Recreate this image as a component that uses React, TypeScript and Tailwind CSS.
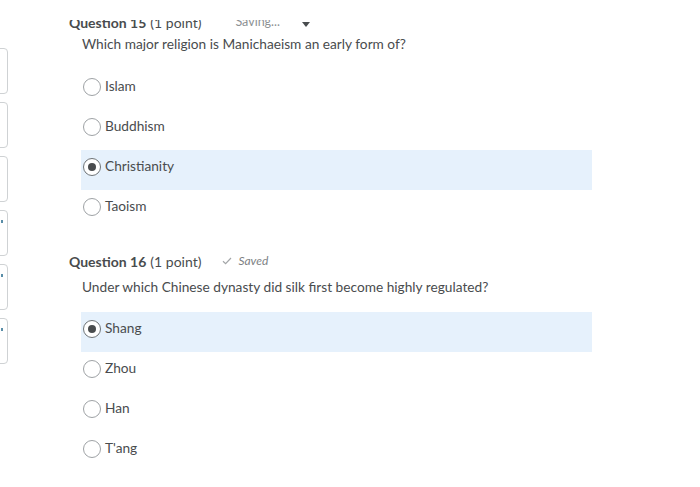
import React from "react";

const font = { fontFamily: "Lato, 'Open Sans', sans-serif" };

function Radio({ checked }: { checked?: boolean }) {
  return (
    <span
      className={`flex h-[18px] w-[18px] items-center justify-center rounded-full border bg-white ${
        checked ? "border-[#6e7376]" : "border-[#9ea2a5]"
      }`}
    >
      {checked && <span className="h-[8px] w-[8px] rounded-full bg-[#494c4e]" />}
    </span>
  );
}

function Option({ label, checked }: { label: string; checked?: boolean }) {
  return (
    <div
      className={`flex h-[40px] w-[511px] items-center gap-[4px] pb-[7px] pl-[2px] ${
        checked ? "bg-[#e6f1fc]" : ""
      }`}
    >
      <Radio checked={checked} />
      <span className="text-[13.7px] text-[#494c4e]">{label}</span>
    </div>
  );
}

export default function App() {
  const boxes = [false, false, false, true, true, true];
  return (
    <div className="relative flex h-[487px] w-[700px] overflow-hidden bg-white" style={font}>
      <div className="flex w-[9px] flex-col gap-[8px] pt-[48px]">
        {boxes.map((dot, i) => (
          <div
            key={i}
            className="relative ml-[-6px] h-[46px] w-[14px] rounded-[4px] border border-[#cfd2d4] bg-white"
          >
            {dot && (
              <span className="absolute left-[6px] top-[9px] h-[3px] w-[2px] bg-[#5a8ea8]" />
            )}
          </div>
        ))}
      </div>
      <div className="ml-[60px] flex flex-col">
        <div className="mt-[12px] flex h-[20px] items-center text-[#494c4e]">
          <span className="text-[14px] font-bold">Question 15</span>
          <span className="ml-[4px] text-[14px]">(1 point)</span>
          <span className="ml-[34px] text-[12.5px] text-[#8d9194]">Saving...</span>
          <span className="ml-[22px] mt-[4px] h-0 w-0 border-x-[4px] border-t-[5px] border-x-transparent border-t-[#494c4e]" />
        </div>
        <div className="ml-[13px] mt-[2px] text-[13.7px] leading-[20px] text-[#494c4e]">
          Which major religion is Manichaeism an early form of?
        </div>
        <div className="ml-[12px] mt-[16px] flex flex-col">
          <Option label="Islam" />
          <Option label="Buddhism" />
          <Option label="Christianity" checked />
          <Option label="Taoism" />
        </div>
        <div className="mt-[21px] flex h-[20px] items-center text-[#494c4e]">
          <span className="text-[14px] font-bold">Question 16</span>
          <span className="ml-[4px] text-[14px]">(1 point)</span>
          <span className="ml-[21px] flex items-center gap-[6px] text-[12px] italic text-[#7d8184]">
            <svg width="10" height="8" viewBox="0 0 10 8" fill="none">
              <path d="M1 4.2 L3.6 6.6 L9 1" stroke="#a3a6a8" strokeWidth="1.2" />
            </svg>
            Saved
          </span>
        </div>
        <div className="ml-[13px] mt-[6px] text-[13.7px] leading-[20px] text-[#494c4e]">
          Under which Chinese dynasty did silk first become highly regulated?
        </div>
        <div className="ml-[12px] mt-[15px] flex flex-col">
          <Option label="Shang" checked />
          <Option label="Zhou" />
          <Option label="Han" />
          <Option label="T'ang" />
        </div>
      </div>
      <div className="absolute left-0 top-0 h-[20px] w-full bg-white" />
    </div>
  );
}
